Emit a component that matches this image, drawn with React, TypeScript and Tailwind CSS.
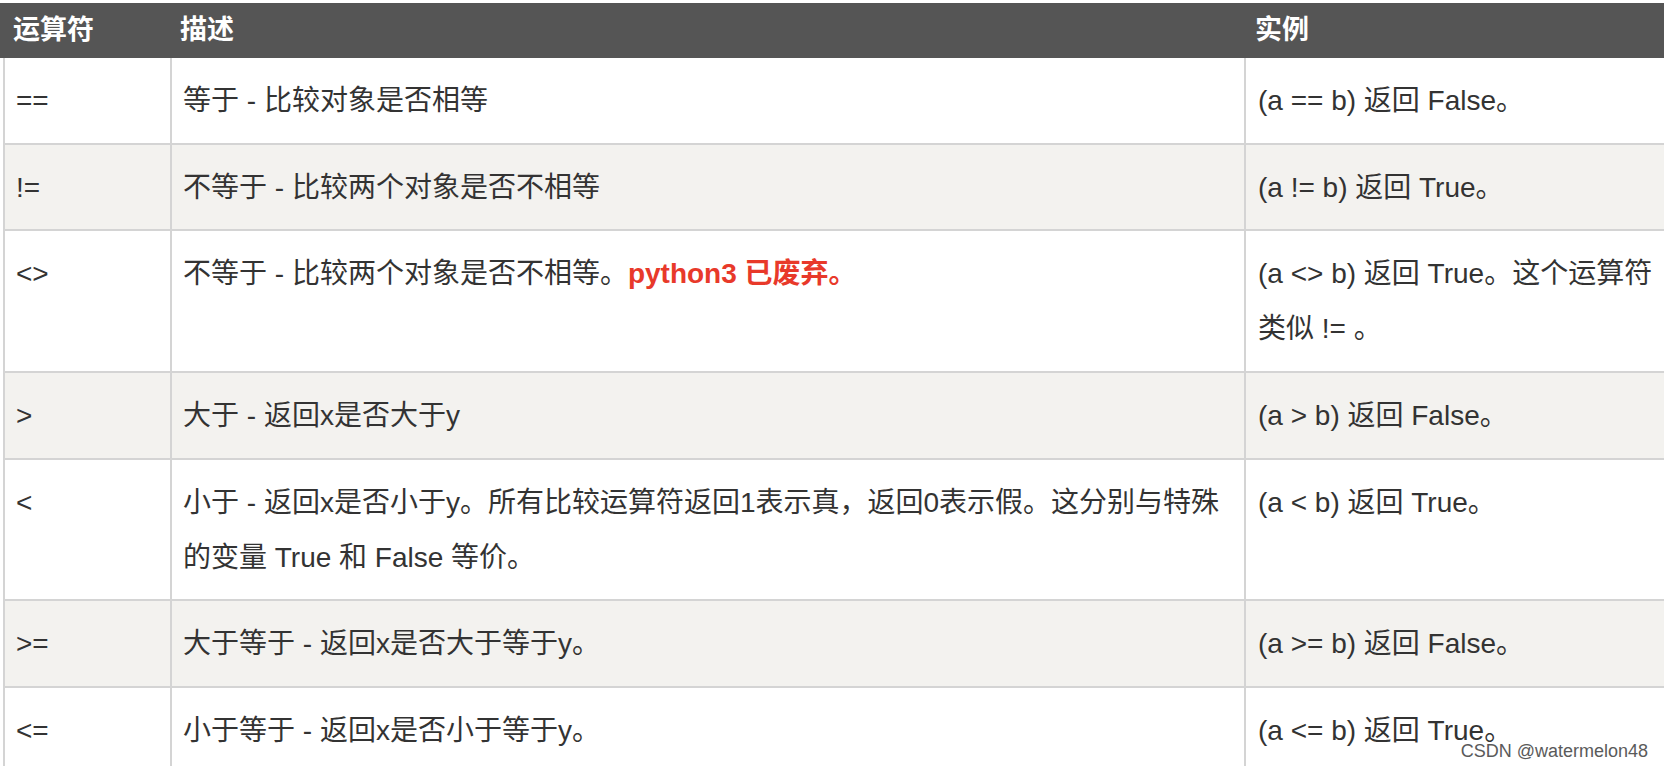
import React from "react";

type Row = {
  op: string;
  desc: React.ReactNode;
  ex: React.ReactNode;
  h: string;
};

const rows: Row[] = [
  { op: "==", desc: "等于 - 比较对象是否相等", ex: "(a == b) 返回 False。", h: "h-[87px]" },
  { op: "!=", desc: "不等于 - 比较两个对象是否不相等", ex: "(a != b) 返回 True。", h: "h-[86px]" },
  {
    op: "<>",
    desc: (
      <>
        不等于 - 比较两个对象是否不相等。
        <span className="font-bold text-[#e8392a]">python3 已废弃。</span>
      </>
    ),
    ex: (
      <>
        (a &lt;&gt; b) 返回 True。这个运算符
        <br />
        类似 != 。
      </>
    ),
    h: "h-[142px]",
  },
  { op: ">", desc: "大于 - 返回x是否大于y", ex: "(a > b) 返回 False。", h: "h-[87px]" },
  {
    op: "<",
    desc: (
      <>
        小于 - 返回x是否小于y。所有比较运算符返回1表示真，返回0表示假。这分别与特殊
        <br />
        的变量 True 和 False 等价。
      </>
    ),
    ex: "(a < b) 返回 True。",
    h: "h-[141px]",
  },
  { op: ">=", desc: "大于等于 - 返回x是否大于等于y。", ex: "(a >= b) 返回 False。", h: "h-[87px]" },
  { op: "<=", desc: "小于等于 - 返回x是否小于等于y。", ex: "(a <= b) 返回 True。", h: "h-[87px]" },
];

export default function App() {
  return (
    <div
      className="relative w-full h-[766px] overflow-hidden bg-white pt-[3px] text-[#333333]"
      style={{ fontFamily: '"Liberation Sans", "Noto Sans CJK SC", Arial, sans-serif' }}
    >
      {/* header */}
      <div className="flex h-[55px] bg-[#555555] text-white font-bold text-[27px]">
        <div className="w-[172px] shrink-0 pl-[13px] flex items-center">运算符</div>
        <div className="w-[1074px] shrink-0 pl-[8px] flex items-center">描述</div>
        <div className="flex-1 pl-[9px] flex items-center">实例</div>
      </div>

      {/* body */}
      <div className="ml-[3px] border-l-2 border-[#d4d4d4] text-[28px] leading-[55px]">
        {rows.map((r, i) => (
          <div
            key={i}
            className={`flex overflow-hidden border-b-2 border-[#d4d4d4] ${r.h} ${
              i % 2 === 1 ? "bg-[#f3f2ef]" : "bg-white"
            }`}
          >
            <div className="w-[167px] shrink-0 border-r-2 border-[#d4d4d4] pl-[11px] py-[15px] whitespace-nowrap">
              {r.op}
            </div>
            <div className="w-[1074px] shrink-0 border-r-2 border-[#d4d4d4] pl-[11px] py-[15px] whitespace-nowrap">
              {r.desc}
            </div>
            <div className="flex-1 pl-[12px] py-[15px] whitespace-nowrap">{r.ex}</div>
          </div>
        ))}
      </div>

      {/* watermark */}
      <div
        className="absolute right-[16px] top-[742px] text-[18px] leading-none text-[#5a5a5a]"
        style={{ textShadow: "0 0 2px #ffffff, 0 0 2px #ffffff" }}
      >
        CSDN @watermelon48
      </div>
    </div>
  );
}
